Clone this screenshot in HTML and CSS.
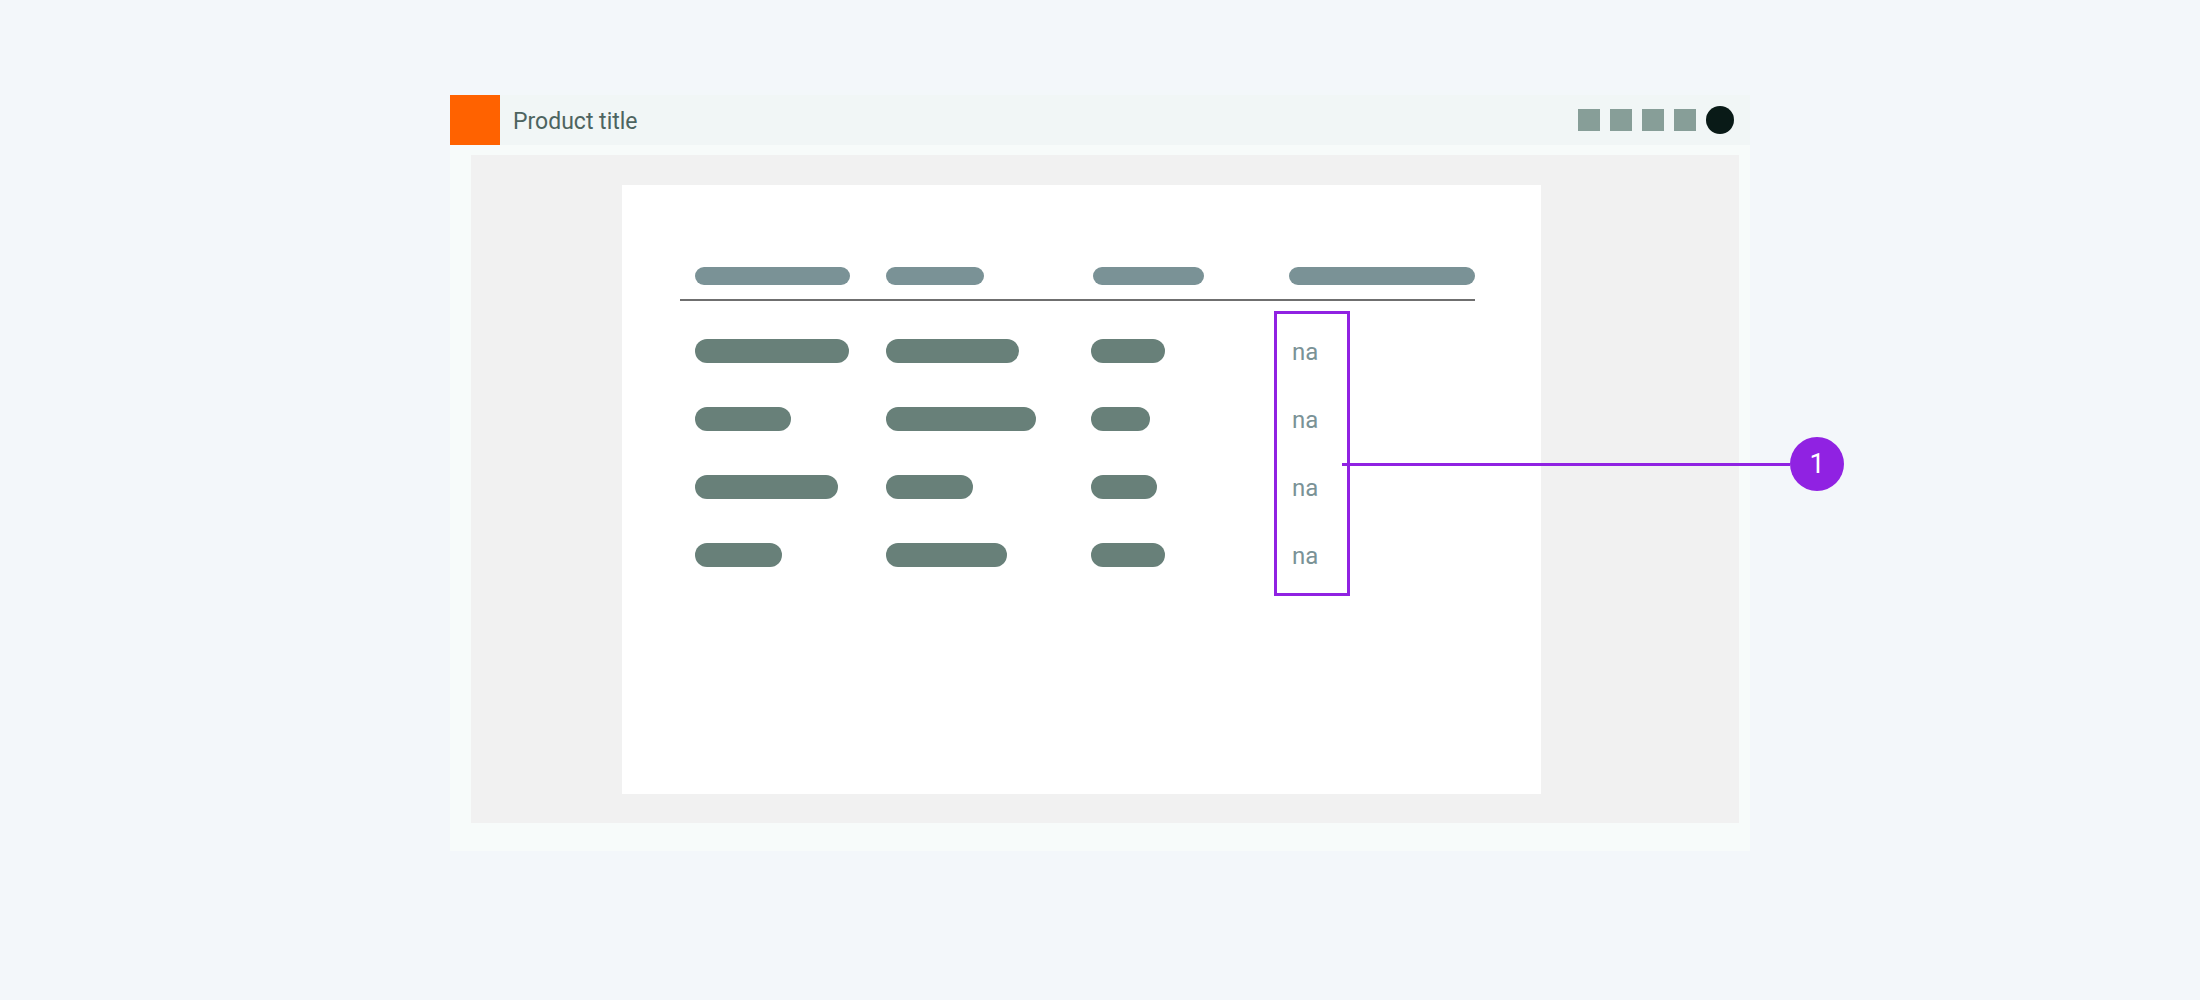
FILE: index.html
```html
<html>
<head>
<title>Product title</title>
<link rel="stylesheet" href="styles.css">
</head>
<body>
    <div class="ventana">
        <div class="barra">
            <div class="logo"></div>
            <span class="titulo">Product title</span>
            <div class="iconos">
                <span class="icono"></span>
                <span class="icono"></span>
                <span class="icono"></span>
                <span class="icono"></span>
                <span class="avatar"></span>
            </div>
        </div>
        <div class="marco">
            <div class="escenario">
                <div class="tarjeta">
                    <div class="tabla">
                        <div class="cabecera">
                            <div class="celda"><span class="pildora encabezado" style="width: 155px;"></span></div>
                            <div class="celda"><span class="pildora encabezado" style="width: 98px;"></span></div>
                            <div class="celda"><span class="pildora encabezado" style="width: 111px; margin-left: 2px;"></span></div>
                            <div class="celda"><span class="pildora encabezado" style="width: 187px;"></span></div>
                        </div>
                        <div class="cuerpo">
                            <div class="celda"><span class="pildora" style="width: 154px;"></span></div>
                            <div class="celda"><span class="pildora" style="width: 133px;"></span></div>
                            <div class="celda"><span class="pildora" style="width: 74px;"></span></div>

                            <div class="celda"><span class="pildora" style="width: 96px;"></span></div>
                            <div class="celda"><span class="pildora" style="width: 150px;"></span></div>
                            <div class="celda"><span class="pildora" style="width: 59px;"></span></div>

                            <div class="celda"><span class="pildora" style="width: 143px;"></span></div>
                            <div class="celda"><span class="pildora" style="width: 87px;"></span></div>
                            <div class="celda"><span class="pildora" style="width: 66px;"></span></div>

                            <div class="celda"><span class="pildora" style="width: 87px;"></span></div>
                            <div class="celda"><span class="pildora" style="width: 121px;"></span></div>
                            <div class="celda"><span class="pildora" style="width: 74px;"></span></div>

                            <!-- cuarta columna resaltada, con su nota -->
                            <div class="resaltado">
                                <div class="valor">na</div>
                                <div class="valor">na</div>
                                <div class="valor">na</div>
                                <div class="valor">na</div>
                                <div class="nota">
                                    <span class="linea"></span>
                                    <span class="numero">1</span>
                                </div>
                            </div>
                        </div>
                    </div>
                </div>
            </div>
        </div>
    </div>
</body>
</html>
```

FILE: styles.css
```css
* {
    -webkit-box-sizing: border-box;     box-sizing: border-box;
    padding: 0px;                       margin: 0px;
}
body {
    background-color: #f3f7fa;    font-family: Roboto, "Noto Sans", sans-serif;
}
.ventana {
    width: 1300px;    margin: 95px 0 0 450px;
}
.barra {
    height: 50px;     display: flex;      align-items: center;
    background-color: #f1f6f6;
}
.logo {
    width: 50px;      height: 50px;       background-color: #ff6200;
}
.titulo {
    margin-left: 13px;    font-size: 23px;    color: #4d6460;
    flex: 1;              padding-top: 3px;
}
.iconos {
    display: flex;    align-items: center;    gap: 10px;
    padding-right: 16px;
}
.icono {
    width: 22px;      height: 22px;       background-color: #879e98;
}
.avatar {
    width: 28px;      height: 28px;       border-radius: 50%;
    background-color: #091a17;
}
.marco {
    background-color: #f7fbfa;
    padding: 10px 11px 28px 21px;
}
.escenario {
    background-color: #f1f1f1;    height: 668px;
    padding: 30px 0 0 151px;
}
.tarjeta {
    width: 919px;     height: 609px;      background-color: white;
    padding-top: 82px;
}
.tabla {
    width: 795px;     margin-left: 58px;
}
.cabecera, .cuerpo {
    display: grid;
    grid-template-columns: 191px 205px 198px 201px;
}
.cabecera {
    padding-bottom: 14px;     border-bottom: 2px solid #6f6f6f;
}
.cuerpo {
    grid-template-rows: 68px 68px 68px 67px;
    padding-top: 16px;
}
.celda {
    display: flex;    align-items: center;    padding-left: 15px;
}
.pildora {
    display: block;   height: 24px;       border-radius: 12px;
    background-color: #688079;
}
.pildora.encabezado {
    height: 18px;     border-radius: 9px;     background-color: #7a9296;
}
.cuerpo .celda:nth-child(3n+1) { grid-column: 1; }
.resaltado {
    grid-column: 4;       grid-row: 1 / 5;
    width: 76px;          margin: -6px 0 -8px 0;
    border: 3px solid #9022e2;
    padding: 3px 0 3px 15px;
    display: flex;        flex-direction: column;
    position: relative;
}
.valor {
    height: 68px;     display: flex;      align-items: center;
    font-size: 24px;  color: #7a9296;     padding-top: 2px;
}
.nota {
    position: absolute;   left: 65px;     top: 123px;
    display: flex;        align-items: center;
}
.linea {
    display: block;   width: 448px;   height: 3px;
    background-color: #9022e2;
}
.numero {
    width: 54px;      height: 54px;       border-radius: 50%;
    background-color: #9022e2;            color: white;
    font-size: 27px;  display: flex;      align-items: center;
    justify-content: center;
}
```
